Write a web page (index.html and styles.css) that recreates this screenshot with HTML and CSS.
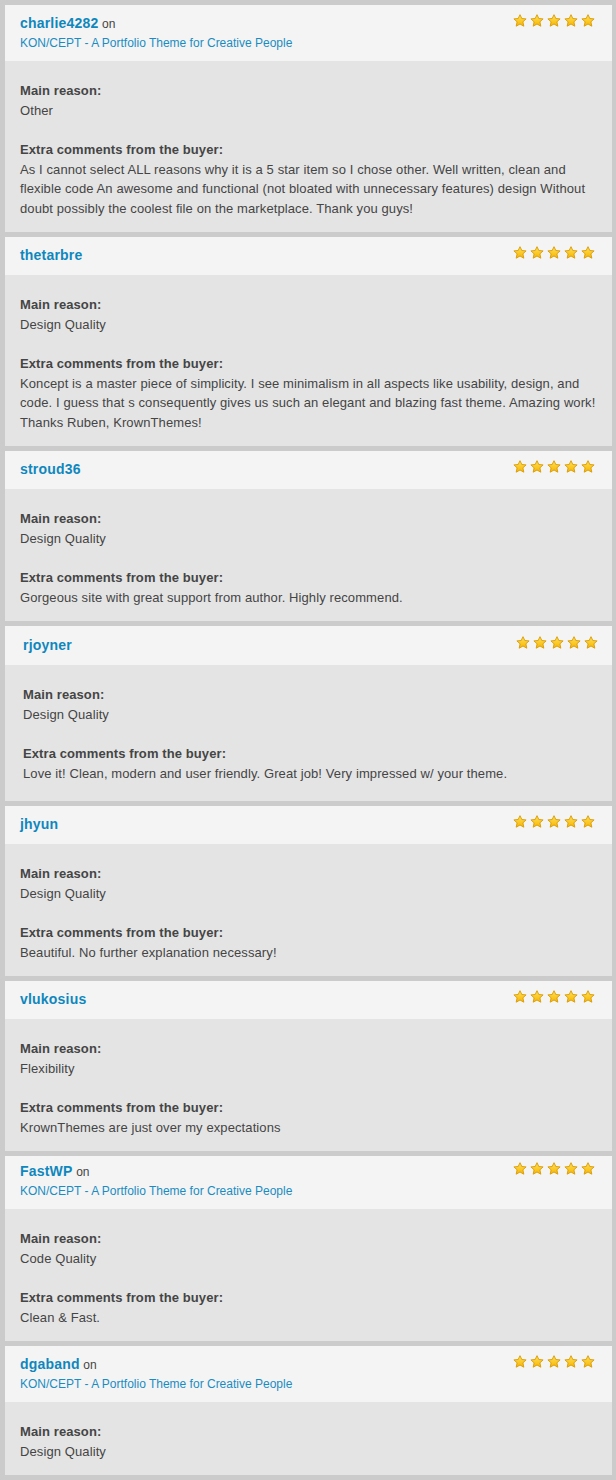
FILE: index.html
```html
<!DOCTYPE html>
<html>
<head>
<meta charset="utf-8">
<link rel="stylesheet" href="styles.css">
</head>
<body>
<svg width="0" height="0" class="defs">
  <defs>
    <linearGradient id="sg" x1="0" y1="0" x2="0" y2="1">
      <stop offset="0" stop-color="#ffe15a"/>
      <stop offset="1" stop-color="#f7b500"/>
    </linearGradient>
    <symbol id="star" viewBox="0 0 14 13">
      <path d="M7 0.7 L8.8 4.5 L13.1 4.9 L9.9 7.8 L10.8 12.2 L7 10 L3.2 12.2 L4.1 7.8 L0.9 4.9 L5.2 4.5 Z" fill="url(#sg)" stroke="#d99a00" stroke-width="0.9" stroke-linejoin="round"/>
    </symbol>
  </defs>
</svg>
<div class="list">

  <div class="card">
    <div class="head">
      <div class="who">
        <div class="line"><a class="user">charlie4282</a> <span class="on">on</span></div>
        <div class="line"><a class="item">KON/CEPT - A Portfolio Theme for Creative People</a></div>
      </div>
      <div class="stars"><svg><use href="#star"/></svg><svg><use href="#star"/></svg><svg><use href="#star"/></svg><svg><use href="#star"/></svg><svg><use href="#star"/></svg></div>
    </div>
    <div class="body">
      <div class="sec"><div class="label">Main reason:</div><div>Other</div></div>
      <div class="sec"><div class="label">Extra comments from the buyer:</div><div>As I cannot select ALL reasons why it is a 5 star item so I chose other. Well written, clean and flexible code An awesome and functional (not bloated with unnecessary features) design Without doubt possibly the coolest file on the marketplace. Thank you guys!</div></div>
    </div>
  </div>

  <div class="card">
    <div class="head">
      <div class="who"><div class="line"><a class="user">thetarbre</a></div></div>
      <div class="stars"><svg><use href="#star"/></svg><svg><use href="#star"/></svg><svg><use href="#star"/></svg><svg><use href="#star"/></svg><svg><use href="#star"/></svg></div>
    </div>
    <div class="body">
      <div class="sec"><div class="label">Main reason:</div><div>Design Quality</div></div>
      <div class="sec"><div class="label">Extra comments from the buyer:</div><div>Koncept is a master piece of simplicity. I see minimalism in all aspects like usability, design, and code. I guess that s consequently gives us such an elegant and blazing fast theme. Amazing work! Thanks Ruben, KrownThemes!</div></div>
    </div>
  </div>

  <div class="card">
    <div class="head">
      <div class="who"><div class="line"><a class="user">stroud36</a></div></div>
      <div class="stars"><svg><use href="#star"/></svg><svg><use href="#star"/></svg><svg><use href="#star"/></svg><svg><use href="#star"/></svg><svg><use href="#star"/></svg></div>
    </div>
    <div class="body">
      <div class="sec"><div class="label">Main reason:</div><div>Design Quality</div></div>
      <div class="sec"><div class="label">Extra comments from the buyer:</div><div>Gorgeous site with great support from author. Highly recommend.</div></div>
    </div>
  </div>

  <div class="card shifted">
    <div class="head">
      <div class="who"><div class="line"><a class="user">rjoyner</a></div></div>
      <div class="stars"><svg><use href="#star"/></svg><svg><use href="#star"/></svg><svg><use href="#star"/></svg><svg><use href="#star"/></svg><svg><use href="#star"/></svg></div>
    </div>
    <div class="body">
      <div class="sec"><div class="label">Main reason:</div><div>Design Quality</div></div>
      <div class="sec"><div class="label">Extra comments from the buyer:</div><div>Love it! Clean, modern and user friendly. Great job! Very impressed w/ your theme.</div></div>
    </div>
  </div>

  <div class="card">
    <div class="head">
      <div class="who"><div class="line"><a class="user">jhyun</a></div></div>
      <div class="stars"><svg><use href="#star"/></svg><svg><use href="#star"/></svg><svg><use href="#star"/></svg><svg><use href="#star"/></svg><svg><use href="#star"/></svg></div>
    </div>
    <div class="body">
      <div class="sec"><div class="label">Main reason:</div><div>Design Quality</div></div>
      <div class="sec"><div class="label">Extra comments from the buyer:</div><div>Beautiful. No further explanation necessary!</div></div>
    </div>
  </div>

  <div class="card">
    <div class="head">
      <div class="who"><div class="line"><a class="user">vlukosius</a></div></div>
      <div class="stars"><svg><use href="#star"/></svg><svg><use href="#star"/></svg><svg><use href="#star"/></svg><svg><use href="#star"/></svg><svg><use href="#star"/></svg></div>
    </div>
    <div class="body">
      <div class="sec"><div class="label">Main reason:</div><div>Flexibility</div></div>
      <div class="sec"><div class="label">Extra comments from the buyer:</div><div>KrownThemes are just over my expectations</div></div>
    </div>
  </div>

  <div class="card compact">
    <div class="head">
      <div class="who">
        <div class="line"><a class="user">FastWP</a> <span class="on">on</span></div>
        <div class="line"><a class="item">KON/CEPT - A Portfolio Theme for Creative People</a></div>
      </div>
      <div class="stars"><svg><use href="#star"/></svg><svg><use href="#star"/></svg><svg><use href="#star"/></svg><svg><use href="#star"/></svg><svg><use href="#star"/></svg></div>
    </div>
    <div class="body">
      <div class="sec"><div class="label">Main reason:</div><div>Code Quality</div></div>
      <div class="sec"><div class="label">Extra comments from the buyer:</div><div>Clean &amp; Fast.</div></div>
    </div>
  </div>

  <div class="card">
    <div class="head">
      <div class="who">
        <div class="line"><a class="user">dgaband</a> <span class="on">on</span></div>
        <div class="line"><a class="item">KON/CEPT - A Portfolio Theme for Creative People</a></div>
      </div>
      <div class="stars"><svg><use href="#star"/></svg><svg><use href="#star"/></svg><svg><use href="#star"/></svg><svg><use href="#star"/></svg><svg><use href="#star"/></svg></div>
    </div>
    <div class="body">
      <div class="sec"><div class="label">Main reason:</div><div>Design Quality</div></div>
    </div>
  </div>

</div>
</body>
</html>
```
FILE: styles.css
```css
html, body {
  margin: 0;
  padding: 0;
  background: #cbcbcb;
}
body {
  font-family: "Liberation Sans", Arial, sans-serif;
  color: #454545;
  font-size: 13px;
}
.defs {
  position: absolute;
  width: 0;
  height: 0;
}
.list {
  display: flex;
  flex-direction: column;
  gap: 5px;
  padding: 5px 4px 5px 5px;
}
.card {
  display: flex;
  flex-direction: column;
}
.head {
  background: #f4f4f4;
  display: flex;
  justify-content: space-between;
  align-items: flex-start;
  padding: 9px 17px 9px 15px;
}
.line {
  height: 19px;
  line-height: 19px;
  white-space: nowrap;
}
.who .line:only-child {
  height: 20px;
}
.user {
  color: #0f87bd;
  font-weight: bold;
  font-size: 14px;
  letter-spacing: 0.2px;
}
.on {
  color: #454545;
  font-size: 12px;
}
.item {
  color: #1a8cc2;
  font-size: 12px;
}
.stars {
  display: flex;
  gap: 3px;
}
.stars svg {
  width: 14px;
  height: 13px;
  display: block;
}
.body {
  background: #e4e4e4;
  padding: 20px 15px 14px;
  line-height: 19.5px;
  letter-spacing: 0.1px;
  display: flex;
  flex-direction: column;
  gap: 20px;
}
.label {
  font-weight: bold;
}
.shifted .head {
  padding: 10px 14px 9px 18px;
}
.shifted .body {
  padding: 20px 15px 18px 18px;
}
.compact .head {
  padding-top: 6px;
}
```
